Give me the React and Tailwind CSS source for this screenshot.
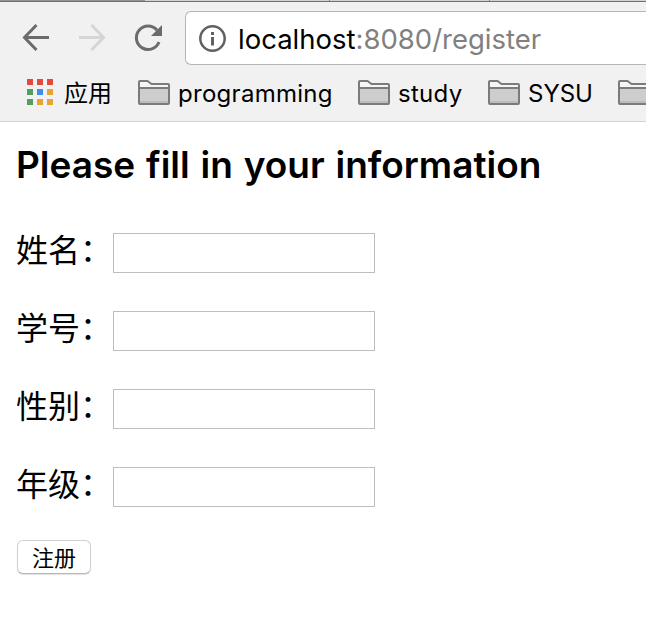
import React from "react";

const tiles = ["#e64a3f", "#e64a3f", "#e64a3f", "#559d5c", "#4389f5", "#e7a435", "#559d5c", "#e7a435", "#e7a435"];

function Folder() {
  return (
    <svg className="block h-[26px] w-8 shrink-0" viewBox="0 0 32 26" fill="none">
      <path d="M1 25V2Q1 1 2 1H9.5L13.5 4H30Q31 4 31 5V24Q31 25 30 25H2Q1 25 1 24Z" fill="#f5f5f5" />
      <path d="M1 8.500H31V24H1Z" fill="#cdcdcd" />
      <path d="M2 21H30V23H2Z" fill="#bcbcbc" />
      <path d="M1 8H31M2 1H9.500L13.500 4H30Q31 4 31 5V23Q31 24 30 24H2Q1 24 1 23V2Q1 1 2 1Z" stroke="#7b7b7b" strokeWidth="2" />
    </svg>
  );
}

function Bookmark({ label, className }) {
  return (
    <div className={"flex shrink-0 items-center " + className}>
      <Folder />
      <span className="ml-2 whitespace-nowrap pt-0.5">{label}</span>
    </div>
  );
}

function Browser() {
  return (
    <header className="h-[122px] overflow-hidden border-b border-[#d3d3d3] bg-[#f1f1f1] font-['Inter','Noto_Sans_CJK_SC',sans-serif]">
      <div className="flex h-0.5 border-b border-[#707070] bg-[#d2d2d2]">
        <div className="w-[145px] bg-[#949494]" />
        <div className="w-[185px] border-r border-[#8a8a8a]" />
        <div className="w-[160px] border-r border-[#8a8a8a]" />
      </div>
      <div className="flex h-[72px] pt-[9px]">
        <svg className="block h-[54px] w-[185px] shrink-0" viewBox="0 11 185 54" fill="none" strokeWidth="3">
          <path d="M49 37.500H25M36.500 25L24.500 37.500L36.500 50" stroke="#6b6b6b" />
          <path d="M79 37.500H103M91.500 25L103.500 37.500L91.500 50" stroke="#d5d5d5" />
          <path d="M159 42A11.700 11.700 0 1 1 157 30.200" stroke="#6b6b6b" />
          <path d="M162 25V36H151Z" fill="#6b6b6b" />
        </svg>
        <div className="flex h-[54px] flex-1 items-center rounded-l-md border border-r-0 border-[#b6b6b6] bg-white pl-[13px]">
          <svg className="block size-7 shrink-0" viewBox="0 0 28 28" fill="none">
            <circle cx="13.500" cy="14.500" r="12.200" stroke="#616161" strokeWidth="2.500" />
            <path d="M12 8H15V11H12ZM12 13H15V21.500H12Z" fill="#616161" />
          </svg>
          <span className="ml-[11px] whitespace-nowrap pt-0.5 text-[27.5px] leading-8 text-black">
            localhost<span className="text-[#808080]">:8080/register</span>
          </span>
        </div>
      </div>
      <nav className="flex h-[38px] items-center overflow-hidden pl-[27px] text-2xl leading-8 text-black">
        <div className="mb-0.5 grid shrink-0 grid-cols-3 gap-1">
          {tiles.map((color, i) => (
            <span key={i} className="size-1.5" style={{ backgroundColor: color }} />
          ))}
        </div>
        <span className="ml-[11px] w-[74px] shrink-0 whitespace-nowrap pt-0.5">应用</span>
        <Bookmark label="programming" className="w-[220px] tracking-[0.28px]" />
        <Bookmark label="study" className="w-[130px] tracking-[0.28px]" />
        <Bookmark label="SYSU" className="w-[130px]" />
        <Bookmark label="" className="" />
      </nav>
    </header>
  );
}

function Field({ label }) {
  return (
    <label className="mb-[38px] flex h-10 items-center">
      <span className="flex w-[97px] shrink-0 whitespace-nowrap pb-1 text-[32px] leading-10">
        {label}
        <span className="-mt-px w-[33px]">：</span>
      </span>
      <input className="block h-10 w-[262px] border border-[#bdbdbd] bg-white px-1 text-2xl outline-none" />
    </label>
  );
}

export default function App() {
  return (
    <div className="h-[632px] w-[646px] overflow-hidden bg-white font-['Inter','Noto_Sans_CJK_SC',sans-serif] text-black">
      <Browser />
      <main className="pl-4 pt-[21px]">
        <h1 className="mb-[46px] whitespace-nowrap text-[37px] font-semibold leading-[44px] [word-spacing:1.5px]">Please fill in your information</h1>
        <form>
          <Field label="姓名" />
          <Field label="学号" />
          <Field label="性别" />
          <Field label="年级" />
          <button type="button" className="-mt-[5px] ml-px flex h-[34px] w-[74px] items-center justify-center rounded-md border border-[#cfcfcf] border-b-[#b8b8b8] bg-white text-[22px] leading-7 shadow-[0_1px_1px_rgba(0,0,0,0.12)]">
            <span className="pt-px">注册</span>
          </button>
        </form>
      </main>
    </div>
  );
}
